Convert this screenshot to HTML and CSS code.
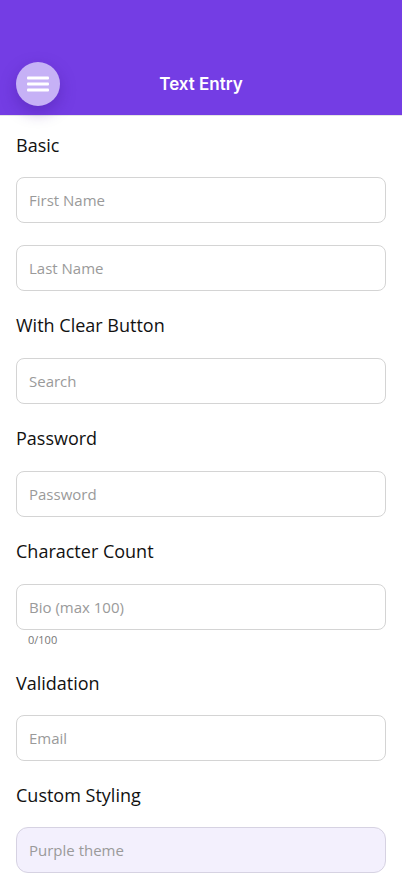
FILE: index.html
```html
<!DOCTYPE html>
<html lang="en">
<head>
  <meta charset="UTF-8" />
  <meta name="viewport" content="width=device-width, initial-scale=1.0"/>
  <title>Text Entry</title>
  <link rel="stylesheet" href="styles.css">
</head>
<body>
  <header class="header">
    <div class="navbar">
      <button class="menu-btn" aria-label="Menu">
        <svg width="22" height="16" viewBox="0 0 22 16">
          <rect x="0" y="0.5" width="22" height="3" rx="1" fill="#fff"/>
          <rect x="0" y="6.5" width="22" height="3" rx="1" fill="#fff"/>
          <rect x="0" y="12.5" width="22" height="3" rx="1" fill="#fff"/>
        </svg>
      </button>
      <h1 class="title">Text Entry</h1>
    </div>
  </header>

  <main class="content">
    <h2 class="section first">Basic</h2>
    <input class="field" type="text" placeholder="First Name" />
    <input class="field gap" type="text" placeholder="Last Name" />

    <h2 class="section">With Clear Button</h2>
    <input class="field" type="search" placeholder="Search" />

    <h2 class="section">Password</h2>
    <input class="field" type="password" placeholder="Password" />

    <h2 class="section">Character Count</h2>
    <input class="field" type="text" maxlength="100" placeholder="Bio (max 100)" />
    <div class="counter">0/100</div>

    <h2 class="section after-counter">Validation</h2>
    <input class="field" type="email" placeholder="Email" />

    <h2 class="section last">Custom Styling</h2>
    <input class="field purple" type="text" placeholder="Purple theme" />
  </main>
</body>
</html>
```

FILE: styles.css
```css
body {
  margin: 0;
  background: #fff;
  font-family: "Open Sans", Arial, sans-serif;
  overflow: hidden;
}
.header {
  background: #743de4;
  height: 115px;
  border-bottom: 1px solid #e4e4e4;
  position: relative;
  z-index: 1;
}
.navbar {
  position: relative;
  display: flex;
  align-items: center;
  justify-content: center;
  height: 44px;
  padding-top: 62px;
}
.menu-btn {
  position: absolute;
  left: 16px;
  top: 62px;
  width: 44px;
  height: 44px;
  border-radius: 50%;
  border: none;
  background: #c6b1f6;
  display: flex;
  align-items: center;
  justify-content: center;
  padding: 0;
  box-shadow: 0 6px 16px rgba(60, 20, 140, 0.35);
}
.title {
  margin: 0;
  color: #fff;
  font-family: Inter, "Liberation Sans", sans-serif;
  font-size: 17px;
  font-weight: 600;
}
.content {
  display: flex;
  flex-direction: column;
  padding: 0 16px;
}
.section {
  margin: 22px 0 21px 0;
  font-size: 18px;
  line-height: 24px;
  font-weight: 400;
  color: #111;
}
.section.first {
  margin-top: 17px;
  margin-bottom: 20px;
}
.section.after-counter {
  margin-top: 23px;
  margin-bottom: 20px;
}
.section.last {
  margin-bottom: 20px;
}
.field {
  box-sizing: border-box;
  width: 100%;
  height: 46px;
  padding: 0 12px;
  border: 1px solid #d4d4d4;
  border-radius: 8px;
  font-family: "Open Sans", Arial, sans-serif;
  font-size: 15px;
  color: #222;
  background: #fff;
  outline: none;
  -webkit-appearance: none;
}
.field::placeholder {
  color: #9a9a9a;
}
.field.gap {
  margin-top: 22px;
}
.field.purple {
  background: #f3f0fd;
  border-color: #d6d2e2;
  border-radius: 12px;
}
.counter {
  margin: 2px 0 0 12px;
  font-size: 11px;
  line-height: 16px;
  color: #777;
}
```
